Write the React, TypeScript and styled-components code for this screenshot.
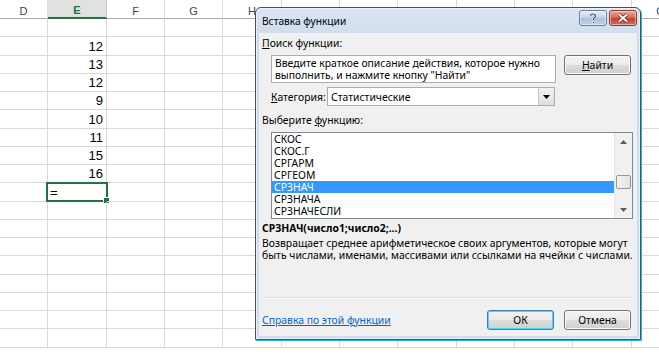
import React from 'react';
import styled, { createGlobalStyle } from 'styled-components';

const Global = createGlobalStyle`
  html, body { margin: 0; padding: 0; background: #fff; }
  body { width: 659px; height: 355px; overflow: hidden; }
`;

const UI = '"Noto Sans", "Open Sans", sans-serif';

const Page = styled.div`
  position: relative;
  width: 659px;
  height: 355px;
  overflow: hidden;
  background: #fff;
`;

/* ---------- sheet ---------- */
const Sheet = styled.div`
  display: flex;
  flex-direction: column;
  font-family: "Liberation Sans", Arial, sans-serif;
`;

const HeaderRow = styled.div`
  display: flex;
  height: 19px;
`;

const HeaderCell = styled.div<{ $w: number; $sel?: boolean }>`
  box-sizing: border-box;
  flex: 0 0 ${p => p.$w}px;
  height: 19px;
  display: flex;
  align-items: center;
  justify-content: center;
  padding-top: 3px;
  font-size: 11px;
  color: ${p => (p.$sel ? '#217346' : '#444')};
  font-weight: ${p => (p.$sel ? 700 : 400)};
  background: ${p => (p.$sel ? '#e1e1e1' : '#fff')};
  border-right: 1px solid ${p => (p.$sel ? '#c6c6c6' : '#dcdcdc')};
  border-bottom: ${p => (p.$sel ? '2px solid #217346' : '1px solid #ababab')};
`;

const Row = styled.div`
  display: flex;
  height: 18.25px;
`;

const Cell = styled.div<{ $w: number }>`
  position: relative;
  box-sizing: border-box;
  flex: 0 0 ${p => p.$w}px;
  height: 18.25px;
  border-right: 1px solid #d9d9d9;
  border-bottom: 1px solid #d9d9d9;
  font-size: 13px;
  color: #000;
  display: flex;
  align-items: flex-end;
  justify-content: flex-end;
  padding: 0 3px 1px 2px;
  line-height: 15px;
`;

const Formula = styled.span`
  margin-right: auto;
`;

const SelBox = styled.div`
  position: absolute;
  left: -2px;
  top: -1px;
  right: -2px;
  bottom: -1px;
  border: 2px solid #217346;
  pointer-events: none;
`;

const Handle = styled.div`
  position: absolute;
  right: -4px;
  bottom: -4px;
  width: 5px;
  height: 5px;
  background: #217346;
  border: 1px solid #fff;
`;

/* ---------- dialog ---------- */
const Dialog = styled.div`
  position: absolute;
  left: 255px;
  top: 7px;
  width: 386px;
  height: 333px;
  box-sizing: border-box;
  border: 1px solid #4a4f57;
  border-radius: 6px 6px 0 0;
  background: linear-gradient(#dbe6f3, #cfdcec 30px, #cfdcec);
  box-shadow: inset 0 0 0 1px #e9f0f8, 1px 1px 0 #2fb3e0;
  display: flex;
  flex-direction: column;
  font-family: ${UI};
  font-size: 10.4px;
  color: #000;
`;

const TitleBar = styled.div`
  height: 25px;
  display: flex;
  align-items: center;
  padding: 0 3px 0 6px;
  flex: 0 0 auto;
`;

const Title = styled.div`
  flex: 1;
  font-size: 10.2px;
  color: #000;
  padding-top: 1px;
`;

const CapBtn = styled.div<{ $close?: boolean }>`
  box-sizing: border-box;
  width: ${p => (p.$close ? 28 : 28)}px;
  height: 16px;
  margin-left: 2px;
  margin-top: -5px;
  border: 1px solid ${p => (p.$close ? '#8a3b32' : '#6d7f98')};
  border-radius: 3px;
  background: ${p =>
    p.$close
      ? 'linear-gradient(#e8a697, #d46d5c 45%, #c0422e 55%, #d1705e)'
      : 'linear-gradient(#e4ecf6, #c6d5e8 45%, #a9bfdb 55%, #c4d4e8)'};
  box-shadow: inset 0 0 0 1px rgba(255, 255, 255, 0.45);
  display: flex;
  align-items: center;
  justify-content: center;
`;

const Client = styled.div`
  flex: 1;
  margin: 0 3px 3px 3px;
  background: #f0f0f0;
  display: flex;
  flex-direction: column;
  padding: 4px 6px 6px 3px;
`;

const Label = styled.div<{ $mt?: number; $bold?: boolean }>`
  line-height: 12px;
  height: 12px;
  margin-top: ${p => p.$mt ?? 0}px;
  font-weight: ${p => (p.$bold ? 700 : 400)};
  white-space: nowrap;
`;

const U = styled.span`
  text-decoration: underline;
`;

const SearchRow = styled.div`
  display: flex;
  gap: 8px;
  margin-top: 6px;
  padding-left: 9px;
  align-items: flex-start;
`;

const TextBox = styled.div`
  box-sizing: border-box;
  width: 285px;
  height: 28px;
  background: #fff;
  border: 1px solid #abadb3;
  padding: 1px 3px;
  line-height: 12px;
  white-space: nowrap;
  overflow: hidden;
`;

const Button = styled.div<{ $default?: boolean }>`
  box-sizing: border-box;
  width: 67px;
  height: 20px;
  border: 1px solid ${p => (p.$default ? '#3c7fb1' : '#707070')};
  border-radius: 3px;
  background: linear-gradient(#f2f2f2, #ebebeb 50%, #dddddd 50%, #cfcfcf);
  box-shadow: inset 0 0 0 1px ${p => (p.$default ? '#48d8fb' : '#fcfcfc')};
  display: flex;
  align-items: center;
  justify-content: center;
  line-height: 12px;
`;

const CategoryRow = styled.div`
  display: flex;
  align-items: center;
  margin-top: 4px;
  padding-left: 9px;
`;

const CatLabel = styled.div`
  width: 56px;
  line-height: 12px;
`;

const Select = styled.div`
  box-sizing: border-box;
  width: 228px;
  height: 19px;
  background: #fff;
  border: 1px solid #acacac;
  display: flex;
  align-items: center;
  padding-left: 3px;
`;

const SelectValue = styled.div`
  flex: 1;
  line-height: 12px;
`;

const DropBtn = styled.div`
  box-sizing: border-box;
  width: 16px;
  height: 17px;
  border-left: 1px solid #c8c8c8;
  background: linear-gradient(#f2f2f2, #dedede);
  display: flex;
  align-items: center;
  justify-content: center;
`;

const ListBox = styled.div`
  box-sizing: border-box;
  margin-top: 6px;
  margin-left: 9px;
  width: 362px;
  height: 87px;
  background: #fff;
  border: 1px solid #828790;
  display: flex;
`;

const Items = styled.div`
  flex: 1;
  display: flex;
  flex-direction: column;
`;

const Item = styled.div<{ $sel?: boolean }>`
  height: 12px;
  line-height: 12px;
  padding-left: 2px;
  background: ${p => (p.$sel ? '#3399ff' : 'transparent')};
  color: ${p => (p.$sel ? '#fff' : '#000')};
`;

const ScrollBar = styled.div`
  width: 17px;
  background: #f0f0f0;
  display: flex;
  flex-direction: column;
  align-items: center;
  border-left: 1px solid #e6e6e6;
`;

const Arrow = styled.div`
  height: 17px;
  width: 17px;
  display: flex;
  align-items: center;
  justify-content: center;
`;

const Track = styled.div`
  flex: 1;
  width: 100%;
  position: relative;
`;

const Thumb = styled.div`
  position: absolute;
  left: 1px;
  right: 1px;
  top: 25px;
  height: 14px;
  box-sizing: border-box;
  border: 1px solid #959595;
  border-radius: 2px;
  background: linear-gradient(90deg, #f3f3f3, #e2e2e2);
`;

const Desc = styled.div`
  margin-top: 3px;
  line-height: 12px;
  white-space: nowrap;
`;

const Spacer = styled.div`
  flex: 1;
`;

const Separator = styled.div`
  height: 1px;
  background: #dcdcdc;
  border-bottom: 1px solid #fff;
`;

const Footer = styled.div`
  display: flex;
  align-items: center;
  gap: 10px;
  margin-top: 11px;
`;

const Link = styled.div`
  color: #0066cc;
  text-decoration: underline;
  margin-right: auto;
  line-height: 12px;
`;

const colWidths = [48, 59, 58, 58, 59, 58, 58, 59, 58, 58, 59, 58];
const colNames = ['D', 'E', 'F', 'G', 'H', 'I', 'J', 'K', 'L', 'M', 'N', 'O'];
const values: (string | null)[] = [null, '12', '13', '12', '9', '10', '11', '15', '16', '=', null, null, null, null, null, null, null, null];

const functions = ['СКОС', 'СКОС.Г', 'СРГАРМ', 'СРГЕОМ', 'СРЗНАЧ', 'СРЗНАЧА', 'СРЗНАЧЕСЛИ'];

export default function App() {
  return (
    <Page>
      <Global />
      <Sheet>
        <HeaderRow>
          {colWidths.map((w, i) => (
            <HeaderCell key={i} $w={w} $sel={i === 1}>
              {colNames[i]}
            </HeaderCell>
          ))}
        </HeaderRow>
        {values.map((v, r) => (
          <Row key={r}>
            {colWidths.map((w, c) => (
              <Cell key={c} $w={w}>
                {c === 1 && v === '=' ? (
                  <>
                    <Formula>=</Formula>
                    <SelBox>
                      <Handle />
                    </SelBox>
                  </>
                ) : c === 1 ? (
                  v
                ) : null}
              </Cell>
            ))}
          </Row>
        ))}
      </Sheet>

      <Dialog>
        <TitleBar>
          <Title>Вставка функции</Title>
          <CapBtn>
            <svg width="10" height="11" viewBox="0 0 10 11">
              <path d="M2.5 3.2 Q2.5 1 5 1 Q7.5 1 7.5 3.2 Q7.5 4.6 5.6 5.4 L5.6 7" fill="none" stroke="#fff" strokeWidth="2.2" />
              <path d="M2.5 3.2 Q2.5 1 5 1 Q7.5 1 7.5 3.2 Q7.5 4.6 5.6 5.4 L5.6 7" fill="none" stroke="#3d4e66" strokeWidth="1.2" />
              <rect x="4.6" y="8.3" width="2" height="2" fill="#3d4e66" stroke="#fff" strokeWidth="0.6" />
            </svg>
          </CapBtn>
          <CapBtn $close>
            <svg width="12" height="10" viewBox="0 0 12 10">
              <path d="M2 1.5 L10 8.5 M10 1.5 L2 8.5" stroke="#5a1a12" strokeWidth="3.4" />
              <path d="M2 1.5 L10 8.5 M10 1.5 L2 8.5" stroke="#fff" strokeWidth="2" />
            </svg>
          </CapBtn>
        </TitleBar>
        <Client>
          <Label>
            <U>П</U>оиск функции:
          </Label>
          <SearchRow>
            <TextBox>
              Введите краткое описание действия, которое нужно
              <br />
              выполнить, и нажмите кнопку "Найти"
            </TextBox>
            <Button>
              <U>Н</U>айти
            </Button>
          </SearchRow>
          <CategoryRow>
            <CatLabel>
              <U>К</U>атегория:
            </CatLabel>
            <Select>
              <SelectValue>Статистические</SelectValue>
              <DropBtn>
                <svg width="7" height="4" viewBox="0 0 7 4">
                  <path d="M0 0 H7 L3.5 4 Z" fill="#000" />
                </svg>
              </DropBtn>
            </Select>
          </CategoryRow>
          <Label $mt={8}>
            Выберите <U>ф</U>ункцию:
          </Label>
          <ListBox>
            <Items>
              {functions.map(f => (
                <Item key={f} $sel={f === 'СРЗНАЧ'}>
                  {f}
                </Item>
              ))}
            </Items>
            <ScrollBar>
              <Arrow>
                <svg width="7" height="4" viewBox="0 0 7 4">
                  <path d="M0 4 H7 L3.5 0 Z" fill="#606060" />
                </svg>
              </Arrow>
              <Track>
                <Thumb />
              </Track>
              <Arrow>
                <svg width="7" height="4" viewBox="0 0 7 4">
                  <path d="M0 0 H7 L3.5 4 Z" fill="#606060" />
                </svg>
              </Arrow>
            </ScrollBar>
          </ListBox>
          <Label $mt={3} $bold>
            СРЗНАЧ(число1;число2;...)
          </Label>
          <Desc>
            Возвращает среднее арифметическое своих аргументов, которые могут
            <br />
            быть числами, именами, массивами или ссылками на ячейки с числами.
          </Desc>
          <Spacer />
          <Separator />
          <Footer>
            <Link>Справка по этой функции</Link>
            <Button $default>ОК</Button>
            <Button>Отмена</Button>
          </Footer>
        </Client>
      </Dialog>
    </Page>
  );
}
